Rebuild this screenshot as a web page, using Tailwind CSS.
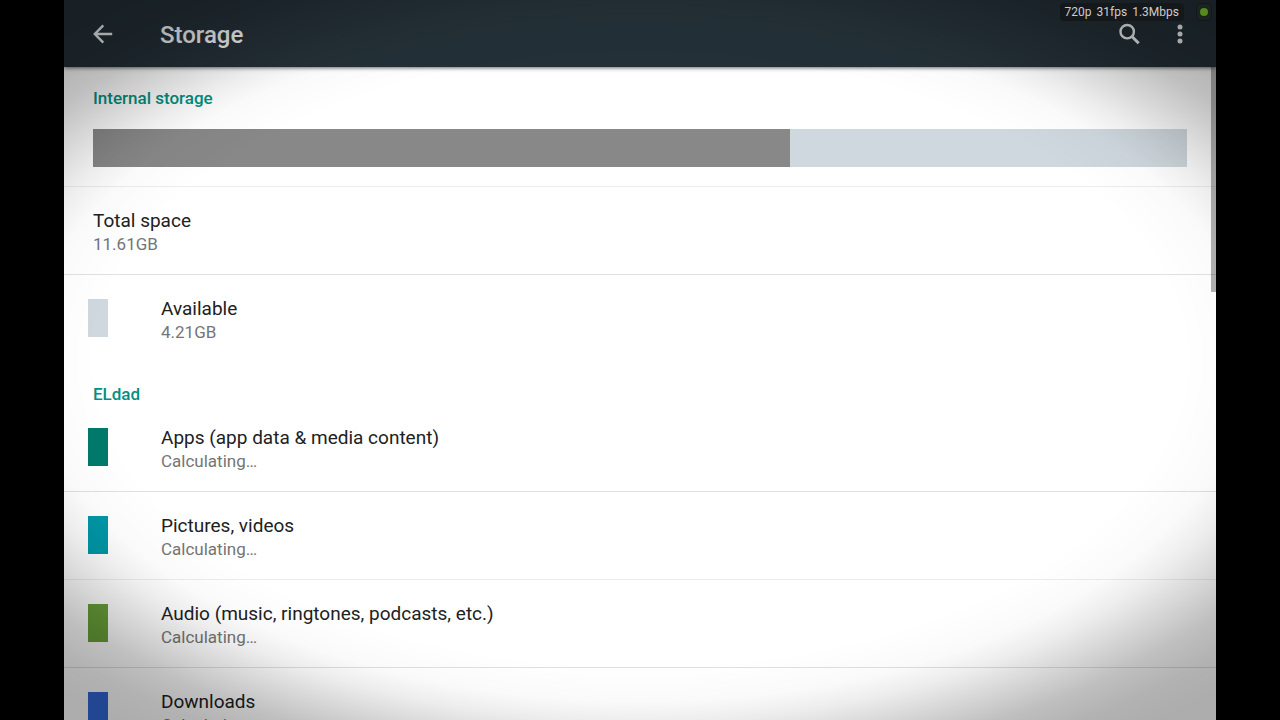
<!DOCTYPE html>
<html lang="en">
<head>
    <meta charset="UTF-8">
    <meta name="viewport" content="width=device-width, initial-scale=1.0">
    <title>Storage</title>
    <script src="https://cdn.jsdelivr.net/npm/@tailwindcss/browser@4"></script>
    <style>
        body {
            font-family: Roboto, 'Noto Sans', sans-serif;
        }
        /* Darkened corners over the whole screen */
        .vignette {
            background: radial-gradient(ellipse farthest-corner at center,
                rgba(0, 0, 0, 0) 60%,
                rgba(0, 0, 0, 0.02) 67%,
                rgba(0, 0, 0, 0.07) 71%,
                rgba(0, 0, 0, 0.16) 76%,
                rgba(0, 0, 0, 0.25) 81%,
                rgba(0, 0, 0, 0.30) 86%,
                rgba(0, 0, 0, 0.32) 91%);
        }
    </style>
</head>
<body class="h-screen overflow-hidden bg-black">

    <div class="relative mx-[5%] flex h-full flex-col bg-white">
        <!-- Action bar -->
        <header class="relative z-10 flex h-[67px] shrink-0 items-center bg-[#243037] pl-[26px] pr-6 shadow-[0_1px_4px_rgba(0,0,0,0.6)]">
            <button type="button" aria-label="Back" class="text-[#f0f3f4]">
                <svg class="size-6" viewBox="0 0 24 24" fill="none" stroke="currentColor" stroke-width="2.4"><path d="M22.200 12H5M13.300 3.300L4.800 12L13.300 20.700"/></svg>
            </button>
            <h1 class="ml-[46px] flex-1 pt-0.5 text-2xl font-medium text-[#f0f3f4]">Storage</h1>
            <button type="button" aria-label="Search" class="text-[#f0f3f4]">
                <svg class="size-6" viewBox="0 0 24 24" fill="none" stroke="currentColor" stroke-width="2.4"><circle cx="9.200" cy="9.700" r="6.700"/><path d="M13.700 14.200L20.700 21.200" stroke-width="3"/></svg>
            </button>
            <button type="button" aria-label="More options" class="ml-[26px] text-[#f0f3f4]">
                <svg class="size-6" viewBox="0 0 24 24" fill="currentColor"><circle cx="12" cy="5" r="2.500"/><circle cx="12" cy="12" r="2.500"/><circle cx="12" cy="19" r="2.500"/></svg>
            </button>
        </header>

        <main>
            <section>
                <h2 class="h-[43px] px-[29px] pt-[19px] text-[17px] leading-6 font-medium text-[#009080]">Internal storage</h2>
                <div class="border-b border-[#ededed] px-[29px] py-[19px]">
                    <div class="h-[38px] bg-[#cfd8de]">
                        <div class="h-full bg-[#888888]" style="width: 63.7%"></div>
                    </div>
                </div>
                <ul>
                    <li class="h-[88px] border-b border-[#e0e0e0] px-[29px] pt-[21px]">
                        <p class="text-[19px] leading-[25px] text-[#212121]">Total space</p>
                        <p class="text-[17px] leading-[22px] text-[#757575]">11.61GB</p>
                    </li>
                    <li class="flex h-[88px] gap-[53px] px-6 pt-[21px]">
                        <span class="mt-[3px] h-[38px] w-5 bg-[#cfd8de]"></span>
                        <div>
                            <p class="text-[19px] leading-[25px] text-[#212121]">Available</p>
                            <p class="text-[17px] leading-[22px] text-[#757575]">4.21GB</p>
                        </div>
                    </li>
                </ul>
            </section>

            <section>
                <h2 class="h-[41px] px-[29px] pt-[19px] text-[17px] leading-6 font-medium text-[#009080]">ELdad</h2>
                <ul>
                    <li class="flex h-[88px] gap-[53px] border-b border-[#e0e0e0] px-6 pt-[21px]">
                        <span class="mt-[3px] h-[38px] w-5 bg-[#00796b]"></span>
                        <div>
                            <p class="text-[19px] leading-[25px] text-[#212121]">Apps (app data &amp; media content)</p>
                            <p class="text-[17px] leading-[22px] text-[#757575]">Calculating…</p>
                        </div>
                    </li>
                    <li class="flex h-[88px] gap-[53px] border-b border-[#ededed] px-6 pt-[21px]">
                        <span class="mt-[3px] h-[38px] w-5 bg-[#0097a7]"></span>
                        <div>
                            <p class="text-[19px] leading-[25px] text-[#212121]">Pictures, videos</p>
                            <p class="text-[17px] leading-[22px] text-[#757575]">Calculating…</p>
                        </div>
                    </li>
                    <li class="flex h-[88px] gap-[53px] border-b border-[#e0e0e0] px-6 pt-[21px]">
                        <span class="mt-[3px] h-[38px] w-5 bg-[#689f38]"></span>
                        <div>
                            <p class="text-[19px] leading-[25px] text-[#212121]">Audio (music, ringtones, podcasts, etc.)</p>
                            <p class="text-[17px] leading-[22px] text-[#757575]">Calculating…</p>
                        </div>
                    </li>
                    <li class="flex h-[88px] gap-[53px] px-6 pt-[21px]">
                        <span class="mt-[3px] h-[38px] w-5 bg-[#3367d6]"></span>
                        <div>
                            <p class="text-[19px] leading-[25px] text-[#212121]">Downloads</p>
                            <p class="text-[17px] leading-[22px] text-[#757575]">Calculating…</p>
                        </div>
                    </li>
                </ul>
            </section>
        </main>

        <!-- Scroll thumb -->
        <div class="absolute top-[67px] right-0 h-[225px] w-[5px] bg-black/30"></div>
    </div>

    <div class="vignette pointer-events-none fixed inset-0 z-20"></div>

    <!-- Recorder overlay -->
    <div class="fixed top-[3px] right-[5%] z-30 flex gap-3">
        <div class="flex h-[18px] items-center gap-[5px] rounded-sm bg-[#15181a] px-[5px] text-xs text-[#cccccc]">
            <span>720p</span><span>31fps</span><span>1.3Mbps</span>
        </div>
        <div class="mr-1 flex h-[18px] w-4 items-center justify-center rounded-sm border border-[#14181a] bg-[#1a2320]">
            <span class="size-2 rounded-full bg-[#558a1c]"></span>
        </div>
    </div>

</body>
</html>
